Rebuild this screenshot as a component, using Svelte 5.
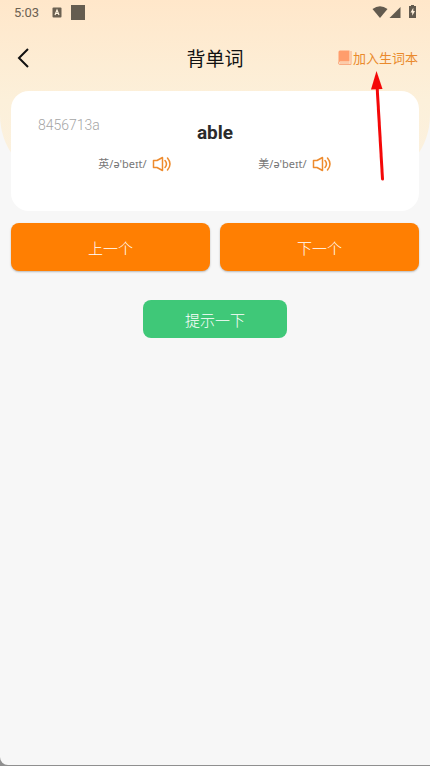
<script>
    let word = "able";
    let code = "8456713a";
    let saved = false;
    let hint = false;

    const sounds = [
        { id: "uk", label: "英/ə'beɪt/" },
        { id: "us", label: "美/ə'beɪt/" },
    ];
</script>

<div class="screen">
    <div class="backdrop"></div>

    <div class="status">
        <span class="time">5:03</span>
        <svg class="app-icon" width="10" height="11" viewBox="0 0 10 11">
            <rect x="0.5" y="0.5" width="9" height="10" rx="1" fill="#6b6152" />
            <path d="M3 8 5 3 7 8M3.700 6.500h2.600" fill="none" stroke="#fff3df" stroke-width="1.200" />
        </svg>
        <span class="block"></span>
        <svg class="signals" width="44" height="14" viewBox="0 0 44 14" fill="#625a4e">
            <path d="M0.500 4Q8 -1.500 15.500 4L8 13Z" />
            <path d="M28.500 2v11h-11Z" />
            <path d="M37 1h2V0h3v1h2v12h-7V1Z" />
            <path d="M41.300 2.700 38.500 7.500h1.700v3.300l2.800-4.800h-1.700Z" fill="#fff0db" />
        </svg>
    </div>

    <header>
        <button class="back" aria-label="返回">
            <svg width="12" height="20" viewBox="0 0 12 20">
                <path d="M11 1 2 10l9 9" fill="none" stroke="#111" stroke-width="2" />
            </svg>
        </button>
        <h1>背单词</h1>
        <button class="save" aria-pressed={saved} on:click={() => (saved = !saved)}>
            <svg width="14" height="15" viewBox="0 0 14 15">
                <path d="M2 0.500h9.500v11H2a1.500 1.500 0 0 0-1.500 1.500V2A1.500 1.500 0 0 1 2 0.500Z" fill="#ff9d6c" />
                <path d="M13 1v13.500H2A1.500 1.500 0 0 1 2 11.500M2 13h9.500" fill="none" stroke="#f9ab82" />
            </svg>
            <span>加入生词本</span>
        </button>
    </header>

    <main>
        <section class="card">
            <span class="code">{code}</span>
            <h2>{word}</h2>
            <div class="sounds">
                {#each sounds as sound (sound.id)}
                    <button class="sound">
                        <span>{sound.label}</span>
                        <svg width="20" height="16" viewBox="0 0 20 16" fill="none" stroke="#ee8b2d" stroke-width="1.500">
                            <path d="M1.500 4.500h3.500L10.500 1.500v13L5 11.500H1.500Z" stroke-linejoin="round" />
                            <path d="M13 4.500q3 3.500 0 7M15.500 2q5 6 0 12" stroke-linecap="round" />
                        </svg>
                    </button>
                {/each}
            </div>
        </section>

        <div class="steps">
            <button>上一个</button>
            <button>下一个</button>
        </div>

        <button class="hint" aria-pressed={hint} on:click={() => (hint = !hint)}>提示一下</button>
    </main>

    <svg class="arrow" width="16" height="112" viewBox="0 0 16 112">
        <path d="M7 14 12.500 108" stroke="#f40808" stroke-width="3" stroke-linecap="round" />
        <path d="M6.500 0 12.500 18 1 18.500Z" fill="#f40808" />
    </svg>
</div>

<style>
    :global(body) {
        background: #8f8f8f;
    }

    .screen {
        position: relative;
        box-sizing: border-box;
        min-height: calc(100vh - 1px);
        overflow: hidden;
        background: #f7f7f7;
        border-bottom-left-radius: 8px;
        font-family: Roboto, "Noto Sans CJK SC", sans-serif;
    }

    .backdrop {
        position: absolute;
        top: 0;
        left: 0;
        right: 0;
        height: 175px;
        background: linear-gradient(#ffe7ca, #fcf0da 100px, #fbf1df);
        border-radius: 0 0 50px 50px / 0 0 60px 60px;
    }

    button {
        padding: 0;
        border: 0;
        background: none;
        font: inherit;
        cursor: pointer;
    }

    svg {
        display: block;
    }

    .status {
        position: relative;
        display: flex;
        align-items: center;
        height: 24px;
        padding: 0 14px;
        color: #6b6152;
    }

    .time {
        margin-right: 13px;
        font-size: 13px;
    }

    .block {
        width: 14px;
        height: 15px;
        margin-left: 9px;
        background: #655d50;
    }

    .signals {
        margin-left: auto;
    }

    header {
        position: relative;
        display: grid;
        grid-template-columns: 1fr auto 1fr;
        align-items: center;
        height: 67px;
        padding: 0 12px;
    }

    .back {
        justify-self: start;
        padding: 0 5px;
    }

    h1 {
        margin: 0;
        font-size: 19px;
        font-weight: 400;
        color: #111;
    }

    .save {
        display: flex;
        align-items: center;
        justify-self: end;
        gap: 1px;
        font-size: 13px;
        color: #ea8a2c;
    }

    main {
        position: relative;
        display: flex;
        flex-direction: column;
        padding: 0 11px;
    }

    .card {
        position: relative;
        box-sizing: border-box;
        min-height: 120px;
        padding: 28px 27px;
        background: #fff;
        border-radius: 18px;
    }

    .code {
        position: absolute;
        top: 26px;
        left: 27px;
        font-size: 14px;
        font-weight: 300;
        line-height: 16px;
        color: #a5a5a5;
    }

    h2 {
        margin: 0;
        font-size: 19px;
        line-height: 28px;
        text-align: center;
        color: #2b2b2b;
    }

    .sounds {
        display: flex;
        justify-content: space-around;
        padding: 7px 17px 0;
    }

    .sound {
        display: flex;
        align-items: center;
        gap: 5px;
        font-family: "Noto Sans", "Noto Sans CJK SC", sans-serif;
        font-size: 11px;
        line-height: 20px;
        color: #777;
    }

    .steps {
        display: flex;
        gap: 10px;
        margin-top: 12px;
    }

    .steps button {
        flex: 1;
        height: 48px;
        font-size: 15px;
        font-weight: 300;
        color: #fff;
        background: #ff7f02;
        border-radius: 8px;
        box-shadow: 0 1px 2px rgb(0 0 0 / 25%);
    }

    .hint {
        align-self: center;
        width: 144px;
        height: 38px;
        margin-top: 29px;
        font-size: 15px;
        font-weight: 300;
        color: #fff;
        background: #3fc878;
        border-radius: 8px;
    }

    .arrow {
        position: absolute;
        top: 71px;
        right: 44px;
        pointer-events: none;
    }
</style>
